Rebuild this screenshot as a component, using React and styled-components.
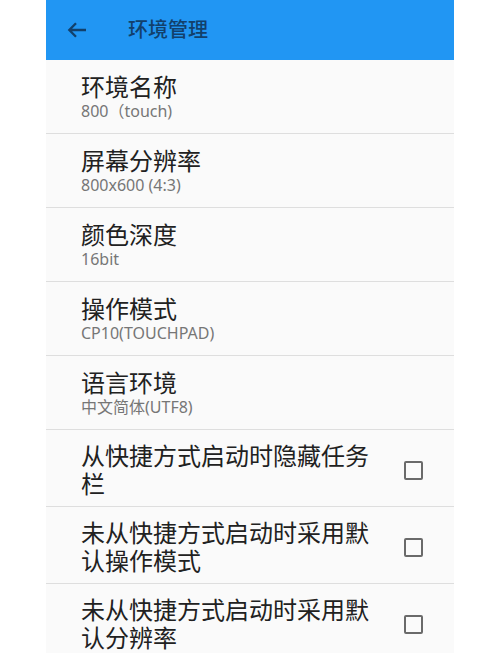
import styled, { createGlobalStyle } from "styled-components";

const GlobalStyle = createGlobalStyle`
    body {
        margin: 0;
        background: #ffffff;
        font-family: "Noto Sans", "Noto Sans CJK SC", sans-serif;
    }
`;

const Screen = styled.div`
    width: 408px;
    margin: 0 auto;
    min-height: 653px;
    background: #fafafa;
`;

const Header = styled.div`
    display: flex;
    align-items: center;
    height: 60px;
    padding-left: 21px;
    background: #2196f3;
    color: #12406b;
`;

const BackIcon = styled.svg`
    width: 20px;
    height: 16px;
    margin-right: 41px;
`;

const HeaderTitle = styled.div`
    font-size: 20px;
    font-weight: 500;
    line-height: 28px;
`;

const Row = styled.div`
    display: flex;
    align-items: center;
    padding: ${(props) => (props.$check ? "12px 31px 8px 35px" : "13px 31px 12px 35px")};
    border-bottom: 1px solid #dedede;
`;

const Texts = styled.div`
    flex: 1;
    min-width: 0;
`;

const Title = styled.div`
    font-size: 24px;
    line-height: 28px;
    color: #212121;
`;

const Subtitle = styled.div`
    font-size: 16px;
    line-height: 20px;
    color: #767676;
`;

const Box = styled.div`
    flex-shrink: 0;
    width: 15px;
    height: 15px;
    margin-left: 16px;
    border: 2px solid #6a6a6a;
    border-radius: 2px;
`;

const items = [
    { title: "环境名称", sub: "800（touch)" },
    { title: "屏幕分辨率", sub: "800x600 (4:3)" },
    { title: "颜色深度", sub: "16bit" },
    { title: "操作模式", sub: "CP10(TOUCHPAD)" },
    { title: "语言环境", sub: "中文简体(UTF8)" },
];

const checks = [
    "从快捷方式启动时隐藏任务栏",
    "未从快捷方式启动时采用默认操作模式",
    "未从快捷方式启动时采用默认分辨率",
];

const App = () => {
    return (
        <>
            <GlobalStyle />
            <Screen>
                <Header>
                    <BackIcon viewBox="0 0 20 16" fill="none">
                        <path
                            d="M19 8H2.5M9 1.3L2.3 8L9 14.7"
                            stroke="currentColor"
                            strokeWidth="2.3"
                        />
                    </BackIcon>
                    <HeaderTitle>环境管理</HeaderTitle>
                </Header>
                {items.map((item) => (
                    <Row key={item.title}>
                        <Texts>
                            <Title>{item.title}</Title>
                            <Subtitle>{item.sub}</Subtitle>
                        </Texts>
                    </Row>
                ))}
                {checks.map((text) => (
                    <Row key={text} $check>
                        <Texts>
                            <Title>{text}</Title>
                        </Texts>
                        <Box />
                    </Row>
                ))}
            </Screen>
        </>
    );
};

export default App;
